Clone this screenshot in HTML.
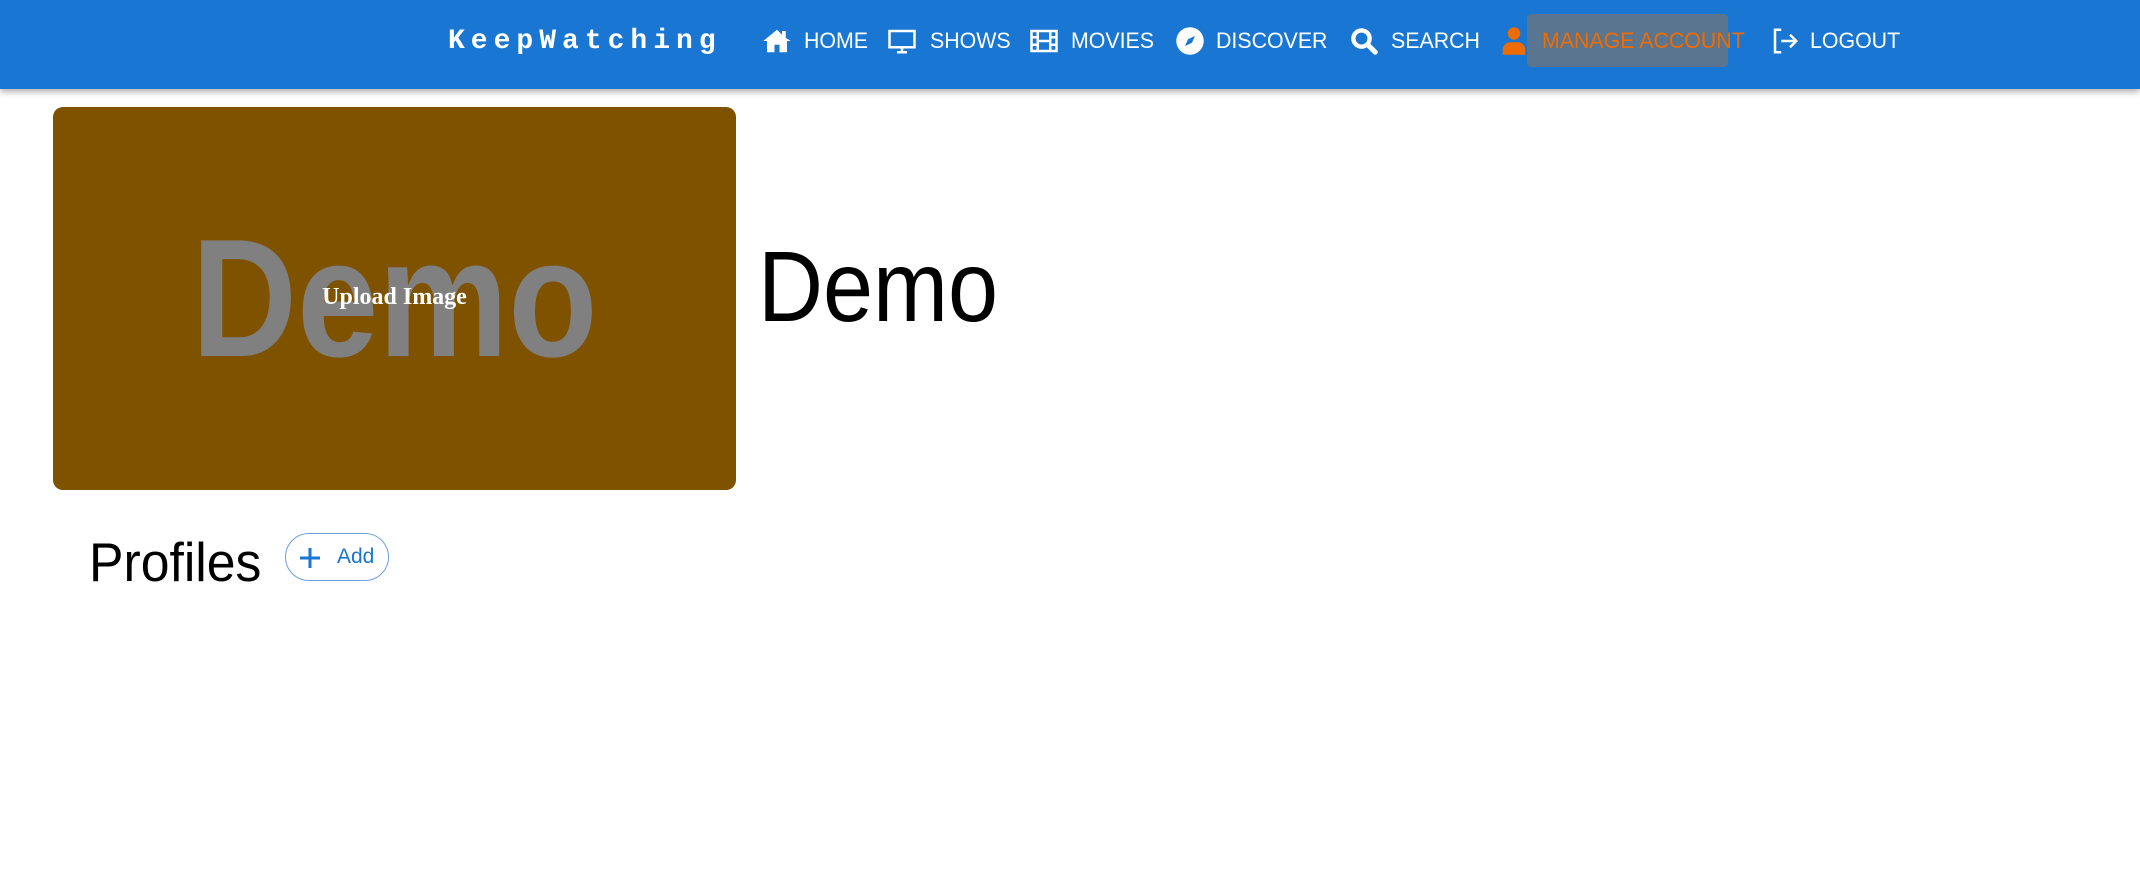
<!DOCTYPE html>
<html><head><meta charset="utf-8"><style>
*{margin:0;padding:0;box-sizing:border-box}
body{width:2140px;height:883px;background:#fff;font-family:"Liberation Sans",sans-serif;position:relative;overflow:hidden}
.nav{position:absolute;left:0;top:0;width:2140px;height:89px;background:#1976d2;box-shadow:0 3px 6px rgba(0,0,0,.3)}
.a{position:absolute;color:#fff;font-size:22px;top:28px;line-height:26px;transform-origin:left;transform:scaleX(.97)}
.i{position:absolute;top:26px;width:30px;height:30px}
.logo{position:absolute;left:448px;top:26px;font-family:"Liberation Mono",monospace;font-weight:bold;font-size:28px;letter-spacing:6px;color:#fff}
</style></head><body>
<div class="nav">
<div class="logo">KeepWatching</div>
<svg class="i" style="left:762px" viewBox="0 0 24 24"><path fill="#fff" d="M12 3 1 12h3v9h6v-6h4v6h6v-9h3L19 9.5V4h-3v3z"/></svg>
<div class="a" style="left:804px">HOME</div>
<svg class="i" style="left:887px" viewBox="0 0 24 24"><path fill="none" stroke="#fff" stroke-width="2" d="M2 4h20v13H2z"/><path stroke="#fff" stroke-width="2" d="M8 21h8M12 17v4"/></svg>
<div class="a" style="left:930px">SHOWS</div>
<svg class="i" style="left:1029px" viewBox="0 0 24 24"><path fill="none" stroke="#fff" stroke-width="2" d="M2 4h20v16H2zM7 4v16M17 4v16M2 9h5M2 15h5M17 9h5M17 15h5M7 12h10"/></svg>
<div class="a" style="left:1071px">MOVIES</div>
<svg class="i" style="left:1175px" viewBox="0 0 24 24"><circle cx="12" cy="12" r="11" fill="#fff"/><path fill="#1976d2" d="M16 8l-2.5 5.5L8 16l2.5-5.5z"/></svg>
<div class="a" style="left:1216px">DISCOVER</div>
<svg class="i" style="left:1349px" viewBox="0 0 24 24"><circle cx="10" cy="10" r="6.5" fill="none" stroke="#fff" stroke-width="3.5"/><path stroke="#fff" stroke-width="4" stroke-linecap="round" d="M15 15l6 6"/></svg>
<div class="a" style="left:1391px">SEARCH</div>
<svg class="i" style="left:1499px" viewBox="0 0 24 24"><circle cx="12" cy="6" r="5" fill="#ef6c00"/><path fill="#ef6c00" d="M3 23v-4a6 6 0 0 1 6-6h6a6 6 0 0 1 6 6v4z"/></svg>
<div style="position:absolute;left:1527px;top:14px;width:201px;height:53px;background:#5a7590;border-radius:4px"></div>
<div class="a" style="left:1542px;color:#ef6c00">MANAGE ACCOUNT</div>
<svg class="i" style="left:1770px" viewBox="0 0 24 24"><path fill="none" stroke="#fff" stroke-width="2" d="M9 3H4v18h5M9 12h12M16 7l5 5-5 5"/></svg>
<div class="a" style="left:1810px">LOGOUT</div>
</div>
<div style="position:absolute;left:53px;top:107px;width:683px;height:383px;background:#7f5200;border-radius:10px;overflow:hidden">
<div style="position:absolute;left:0;right:0;top:96px;text-align:center;font-weight:bold;font-size:168px;line-height:190px;color:#808080;transform:scaleX(.87)">Demo</div>
<div style="position:absolute;left:0;right:0;top:177px;text-align:center;font-family:'Liberation Serif',serif;font-weight:bold;font-size:24px;color:#fff">Upload Image</div>
</div>
<div style="position:absolute;left:758px;top:227px;font-size:100px;line-height:120px;color:#000;transform-origin:left;transform:scaleX(.9)">Demo</div>
<div style="position:absolute;left:89px;top:532px;font-size:55px;line-height:60px;color:#000;transform-origin:left;transform:scaleX(.94)">Profiles</div>
<div style="position:absolute;left:285px;top:533px;width:104px;height:48px;border:1px solid #6aa0e0;border-radius:24px;color:#1976d2">
<svg style="position:absolute;left:12px;top:12px" width="24" height="24" viewBox="0 0 24 24"><path stroke="#1976d2" stroke-width="3" d="M12 2v20M2 12h20"/></svg>
<span style="position:absolute;left:51px;top:11px;font-size:21px">Add</span></div>
</body></html>
